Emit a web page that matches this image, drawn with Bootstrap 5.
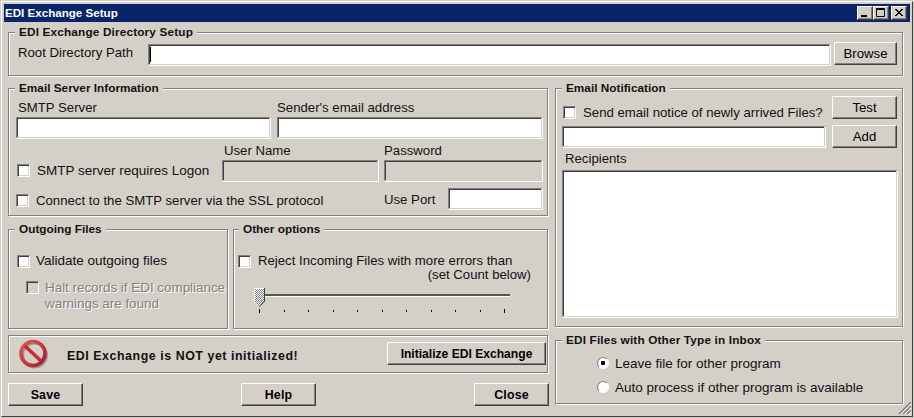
<!DOCTYPE html>
<html lang="en">
<head>
<meta charset="utf-8">
<title>EDI Exchange Setup</title>
<link href="https://cdn.jsdelivr.net/npm/bootstrap@5.3.0/dist/css/bootstrap.min.css" rel="stylesheet">
<style>
html,body{margin:0;height:418px;overflow:hidden;background:#d4d0c8}
body{font:13.2px/16px "Liberation Sans",Arial,sans-serif;color:#111}
span,.lb,.rec,.set-c{white-space:nowrap}
.t-w{font-size:13.500px}
.win-frame{width:914px;height:418px;padding:1px;background:#d4d0c8;position:relative}
.win-edge{height:416px;border:1px solid;border-color:#fff #404040 #404040 #fff;padding:2px 2px 0 2px;width:912px}
.win-title{height:18px;background:#0a246a;color:#fff;font:bold 11.600px/18px "Liberation Sans",sans-serif;padding:0 2px 0 1px}
.cap-btn{width:16px;height:14px;padding:0;background:#d4d0c8;border:1px solid;border-color:#fff #404040 #404040 #fff;box-shadow:inset -1px -1px 0 #808080;display:flex;align-items:center;justify-content:center}
.caps{margin-right:1px}
.cap-gap{margin-left:2px}
.win-body{padding:10px 0 0 4px;width:899px}
.grp{position:relative;border:1px solid #808080;box-shadow:1px 1px 0 #fff,inset 1px 1px 0 #fff}
.grp-t{position:absolute;top:-9px;left:6px;padding:0 4px;background:#d4d0c8;font:bold 11.800px/16px "Liberation Sans",sans-serif;white-space:nowrap}
.grp-wide{letter-spacing:.15px}
.g-dir{height:44px;padding:9px 5px 0 9px}
.dir-lbl{width:130px;padding-top:3px}
.cols{margin-top:12px;gap:7px}
.col-l{width:540px}
.col-r{width:348px}
.g-srv{height:128px;padding:10px 0 0 7px}
.gap7{gap:7px}
.w-a{width:254px}.w-b{width:265px}.w-c{width:156px}.w-d{width:158px}.w-e{width:94px;margin-right:5px}
.lb{height:18px;padding:1px 0 0 2px}
.lb-0{padding-left:0}
.inp{display:block;height:21px;padding:0;border:1px solid;border-color:#808080 #d4d0c8 #d4d0c8 #808080;border-radius:0;background:#fff;box-shadow:inset 1px 1px 0 #404040,1px 1px 0 #fff;outline:0}
.inp:disabled{background:#d4d0c8}
.inp-caret{background:#fff linear-gradient(#000,#000) no-repeat 1px 2px/1px 15px}
.w-f{height:21px;margin-top:2px}
.r2{margin-top:4px;gap:6px}
.r2-left{width:200px;height:39px;padding:18px 0 0 1px}
.r3{margin-top:7px;height:21px}
.port{width:64px;padding-top:2px}
.chk{appearance:none;-webkit-appearance:none;flex:none;display:block;width:13px;height:13px;margin:0 7px 0 0;background:#fff;border:1px solid;border-color:#808080 #fff #fff #808080;box-shadow:inset 1px 1px 0 #404040,inset -1px -1px 0 #d4d0c8}
.chk:disabled{background:#d4d0c8;opacity:1}
.chk-n{margin-right:6px}
.rad{appearance:none;-webkit-appearance:none;flex:none;display:block;width:12px;height:12px;margin:0 6px 0 0;border-radius:50%;background:#fff;border:1px solid;border-color:#808080 #fff #fff #808080}
.rad:checked{background:radial-gradient(circle,#000 0 2px,#fff 2.5px)}
.rw span{padding-top:2px}
.top1{margin-top:4px}
.g-out,.g-oth{height:100px;margin-top:13px}
.g-out{width:220px;padding:23px 0 0 8px}
.g-oth{width:315px;padding:23px 0 0 4px}
.g-oth .grp-t{left:5px}
.halt{margin:11px 0 0 9px}
.halt .chk{margin:1px 6px 0 0}
.dim{color:#808080;text-shadow:1px 1px 0 #fff;line-height:16px;letter-spacing:-.05px}
.row-g{gap:5px}
.set-c{text-align:right;width:293px;margin-top:-2px}
.slid{display:block;margin:5px 0 0 16px}
.g-note{height:38px;margin-top:6px;padding:0 1px 0 10px}
.note-t{font:bold 12.400px/16px "Liberation Sans",sans-serif;margin-left:18px;letter-spacing:.55px;padding-top:4px}
.wbtn{display:block;padding:0;background:#d4d0c8;color:#000;border:1px solid;border-color:#fff #404040 #404040 #fff;border-radius:0;box-shadow:inset -1px -1px 0 #808080;font:13.2px/16px "Liberation Sans",sans-serif}
.wbtn:hover{background:#d4d0c8;color:#000;border-color:#fff #404040 #404040 #fff}
.wb{font-weight:700;font-size:12.400px;letter-spacing:.2px}
.b-brw{width:63px;height:23px;margin-left:4px}
.b-init{width:159px;height:23px;margin-top:-1px;font-size:12.100px;letter-spacing:0}
.b-ft{width:75px;height:23px}
.foot{margin-top:10px;width:541px}
.g-not{height:239px;padding:7px 0 0 6px}
.not-g{display:grid;grid-template-columns:263px 65px;column-gap:7px}
.b-tst{height:23px}
.inp-em{margin-top:7px;width:263px}
.b-add{height:23px;margin-top:6px}
.not-c{height:23px;padding:10px 0 0 1px}
.rec{padding:3px 0 0 3px;height:22px}
.inp-ta{width:335px;height:147px;resize:none}
.g-oty{height:64px;margin-top:13px;padding:16px 0 0 41px}
.rw{height:12px}
.rw+.rw{margin-top:12px}
.grip{position:absolute;right:3px;bottom:4px}
</style>
</head>
<body>
<div class="win-frame">
<div class="win-edge">
  <div class="win-title d-flex align-items-center justify-content-between">
    <span>EDI Exchange Setup</span>
    <div class="d-flex caps">
      <button class="cap-btn" aria-label="Minimize"><svg width="10" height="10"><rect x="1" y="7" width="6" height="2" fill="#000"/></svg></button>
      <button class="cap-btn" aria-label="Maximize"><svg width="10" height="10"><path d="M.5 1.500h8v7h-8zM0 .5h9" fill="none" stroke="#000"/></svg></button>
      <button class="cap-btn cap-gap" aria-label="Close"><svg width="10" height="10"><path d="M1 1l7 7M2 1l7 7M8 1L1 8M9 1L2 8" stroke="#000" stroke-width="1" fill="none"/></svg></button>
    </div>
  </div>
  <div class="win-body">
    <div class="grp g-dir d-flex align-items-start">
      <span class="grp-t grp-wide">EDI Exchange Directory Setup</span>
      <span class="dir-lbl">Root Directory Path</span>
      <input class="inp inp-caret w-f flex-fill" type="text" aria-label="Root Directory Path">
      <button class="wbtn b-brw">Browse</button>
    </div>
    <div class="d-flex cols">
      <div class="col-l">
        <div class="grp g-srv">
          <span class="grp-t">Email Server Information</span>
          <div class="d-flex gap7">
            <div class="w-a"><div class="lb">SMTP Server</div><input class="inp w-100" type="text"></div>
            <div class="w-b"><div class="lb lb-0">Sender's email address</div><input class="inp w-100" type="text"></div>
          </div>
          <div class="d-flex r2">
            <div class="r2-left d-flex align-items-center"><input class="chk" type="checkbox"><span class="t-w">SMTP server requires Logon</span></div>
            <div class="w-c"><div class="lb">User Name</div><input class="inp w-100" type="text" disabled></div>
            <div class="w-d"><div class="lb lb-0">Password</div><input class="inp w-100" type="text" disabled></div>
          </div>
          <div class="d-flex r3 align-items-center">
            <input class="chk top1" type="checkbox"><span class="top1">Connect to the SMTP server via the SSL protocol</span>
            <span class="port ms-auto">Use Port</span>
            <input class="inp w-e" type="text">
          </div>
        </div>
        <div class="d-flex row-g">
          <div class="grp g-out">
            <span class="grp-t">Outgoing Files</span>
            <div class="d-flex align-items-center"><input class="chk chk-n" type="checkbox"><span class="t-w">Validate outgoing files</span></div>
            <div class="d-flex halt align-items-start">
              <input class="chk" type="checkbox" disabled>
              <span class="dim t-w">Halt records if EDI compliance<br>warnings are found</span>
            </div>
          </div>
          <div class="grp g-oth">
            <span class="grp-t">Other options</span>
            <div class="d-flex align-items-center"><input class="chk" type="checkbox"><span>Reject Incoming Files with more errors than</span></div>
            <div class="set-c">(set Count below)</div>
            <svg class="slid" width="260" height="28" viewBox="0 0 260 28" role="img" aria-label="Count slider">
              <defs><pattern id="chk" width="2" height="2" patternUnits="userSpaceOnUse"><rect width="2" height="2" fill="#fff"/><rect width="1" height="1" fill="#808080"/><rect x="1" y="1" width="1" height="1" fill="#808080"/></pattern></defs>
              <rect x="2" y="6" width="254" height="3" fill="#fff"/>
              <rect x="2" y="6" width="254" height="2" fill="#555"/>
              <path d="M1 0h9v13l-5 5-5-5z" fill="url(#chk)"/>
              <path d="M.5 14V.5h9" fill="none" stroke="#fff"/>
              <path d="M10.500 0v13.500l-5 5" fill="none" stroke="#404040"/>
              <path d="M5.500 21v4M30.500 22v2M54.500 22v2M79.500 22v2M103.500 22v2M128.500 22v2M152.500 22v2M177.500 22v2M201.500 22v2M226.500 22v2M250.500 21v4" stroke="#000"/>
            </svg>
          </div>
        </div>
        <div class="grp g-note d-flex align-items-center">
          <svg width="30" height="30" viewBox="0 0 30 30" role="img" aria-label="Not initialized">
            <defs><linearGradient id="rg" x1="0" y1="0" x2="1" y2="1"><stop offset="0" stop-color="#e25a5a"/><stop offset="1" stop-color="#a81820"/></linearGradient></defs>
            <circle cx="15.500" cy="16" r="12" fill="none" stroke="#9a9a96" stroke-width="3"/>
            <circle cx="14" cy="14.500" r="12" fill="none" stroke="url(#rg)" stroke-width="3.600"/>
            <path d="M6 7l16 15" stroke="#c03038" stroke-width="3.600"/>
          </svg>
          <span class="note-t flex-fill">EDI Exchange is NOT yet initialized!</span>
          <button class="wbtn wb b-init">Initialize EDI Exchange</button>
        </div>
        <div class="d-flex justify-content-between foot">
          <button class="wbtn wb b-ft">Save</button>
          <button class="wbtn wb b-ft">Help</button>
          <button class="wbtn wb b-ft">Close</button>
        </div>
      </div>
      <div class="col-r">
        <div class="grp g-not">
          <span class="grp-t">Email Notification</span>
          <div class="not-g">
            <div class="d-flex align-items-center not-c"><input class="chk" type="checkbox"><span>Send email notice of newly arrived Files?</span></div>
            <button class="wbtn b-tst">Test</button>
            <input class="inp inp-em" type="text">
            <button class="wbtn b-add">Add</button>
          </div>
          <div class="rec">Recipients</div>
          <textarea class="inp inp-ta" aria-label="Recipients"></textarea>
        </div>
        <div class="grp g-oty">
          <span class="grp-t grp-wide">EDI Files with Other Type in Inbox</span>
          <div class="d-flex align-items-center rw"><input class="rad" type="radio" name="oty" checked><span class="t-w">Leave file for other program</span></div>
          <div class="d-flex align-items-center rw"><input class="rad" type="radio" name="oty"><span class="t-w">Auto process if other program is available</span></div>
        </div>
      </div>
    </div>
  </div>
</div>
<svg class="grip" width="13" height="12" viewBox="0 0 13 12" aria-hidden="true"><path d="M1 12L13 0M5 12l8-8M9 12l4-4" stroke="#808080" stroke-width="1.500"/><path d="M3 12L13 2M7 12l6-6M11 12l2-2" stroke="#fff"/></svg>
</div>
</body>
</html>
